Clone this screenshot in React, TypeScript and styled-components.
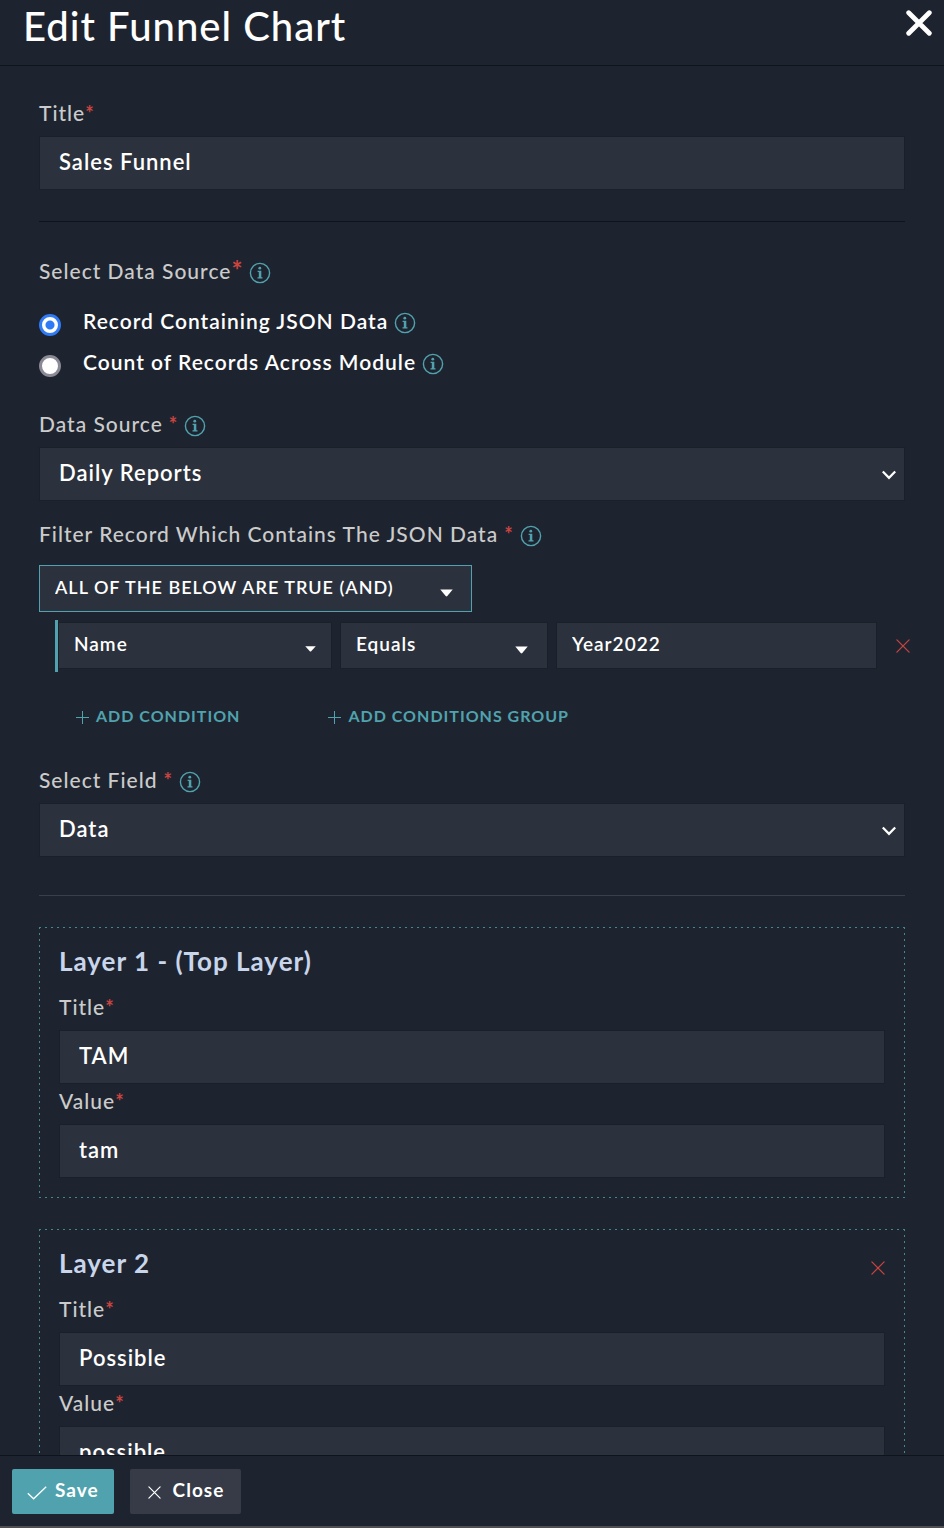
import React, { useId, useState } from "react";
import styled, { createGlobalStyle, css } from "styled-components";

const color = {
  page: "#1e242f",
  field: "#2c323d",
  fieldEdge: "#1a1f28",
  line: "#0f131b",
  softLine: "#3a3f49",
  teal: "#50a3ae",
  dotted: "#438790",
  red: "#cb4540",
  label: "#cbcbcb",
  heading: "#c8d5ea",
  white: "#ffffff",
  blue: "#2f7bf6",
  grey: "#8b8995",
  close: "#363b47",
};

const GlobalStyle = createGlobalStyle`
  *, *::before, *::after { box-sizing: border-box; }
  body {
    margin: 0;
    background: ${color.page};
    color: ${color.white};
    font-family: Lato, "Liberation Sans", sans-serif;
    letter-spacing: 1px;
  }
  button, input, select { font: inherit; color: inherit; letter-spacing: inherit; margin: 0; }
`;

const Dialog = styled.form`
  display: flex;
  flex-direction: column;
  height: 100vh;
  border-bottom: 2px solid #504e50;
`;

const Header = styled.header`
  display: flex;
  flex: none;
  align-items: flex-start;
  justify-content: space-between;
  padding: 2px 12px 15px 23px;
  border-bottom: 1px solid ${color.line};
`;

const DialogTitle = styled.h1`
  margin: 0;
  font-size: 40px;
  font-weight: 500;
  line-height: 48px;
`;

const IconButton = styled.button`
  display: flex;
  align-items: center;
  justify-content: center;
  padding: 0;
  border: 0;
  background: none;
  cursor: pointer;
`;

const HeaderClose = styled(IconButton)`
  margin-top: 8px;
`;

const Body = styled.main`
  flex: 1;
  min-height: 0;
  overflow-y: auto;
  scrollbar-width: none;
  padding: 34px 39px 31px;
`;

const Divider = styled.hr<{ $soft?: boolean }>`
  height: 1px;
  margin: ${(p) => (p.$soft ? "38px 0 31px" : "31px 0 36px")};
  border: 0;
  background: ${(p) => (p.$soft ? color.softLine : color.line)};
`;

const FieldGroup = styled.div<{ $top?: number }>`
  margin-top: ${(p) => p.$top ?? 0}px;
`;

const LabelRow = styled.div`
  display: flex;
  align-items: center;
  height: 26px;
  margin-bottom: 10px;
  color: ${color.label};
  font-size: 21px;
  font-weight: 500;
  line-height: 26px;
`;

const Star = styled.span<{ $spaced?: boolean; $large?: boolean }>`
  color: ${color.red};
  font-size: 20px;
  font-weight: 700;
  ${(p) => p.$spaced && css`margin-left: 6px;`}
  ${(p) =>
    p.$large &&
    css`
      align-self: flex-start;
      font-size: 26px;
      line-height: 24px;
    `}
`;

const InfoMark = styled.svg`
  flex: none;
  width: 22px;
  height: 22px;
  margin: 4px 0 0 6px;
`;

const fieldBox = css`
  display: block;
  width: 100%;
  height: 54px;
  padding: 0 19px 3px;
  border: 1px solid ${color.fieldEdge};
  border-radius: 0;
  background: ${color.field};
  font-size: 22px;
  font-weight: 600;
  outline: none;
`;

const smallBox = css`
  height: 47px;
  padding: 0 16px 4px 15px;
  font-size: 19px;
`;

const TextInput = styled.input<{ $small?: boolean }>`
  ${fieldBox}
  ${(p) => p.$small && smallBox}
`;

const SelectWrap = styled.div<{ $half?: boolean }>`
  position: relative;
  width: ${(p) => (p.$half ? "50%" : "100%")};
`;

const SelectBox = styled.select<{ $small?: boolean; $outlined?: boolean }>`
  ${fieldBox}
  ${(p) => p.$small && smallBox}
  appearance: none;
  ${(p) =>
    p.$outlined &&
    css`
      border-color: ${color.teal};
      font-size: 18px;
    `}
`;

const SelectMark = styled.svg<{ $right: number }>`
  position: absolute;
  top: 50%;
  right: ${(p) => p.$right}px;
  pointer-events: none;
`;

const ChevronMark = styled(SelectMark)`
  margin-top: -4px;
`;

const RadioList = styled.div`
  margin: 17px 0 28px;
`;

const RadioRow = styled.label`
  display: flex;
  align-items: center;
  height: 41px;
  padding-bottom: 2px;
  font-size: 21px;
  font-weight: 600;
`;

const Radio = styled.input`
  appearance: none;
  flex: none;
  width: 22px;
  height: 22px;
  margin: 9px 22px 0 0;
  border: 3px solid ${color.grey};
  border-radius: 50%;
  background: ${color.white};

  &:checked {
    border-color: ${color.blue};
    background: radial-gradient(circle, ${color.blue} 4px, ${color.white} 5px);
  }
`;

const ConditionRow = styled.div`
  display: grid;
  grid-template-columns: 274fr 208fr 321fr 36px;
  gap: 8px;
  align-items: center;
  height: 52px;
  margin: 8px -16px 30px 16px;
  padding-bottom: 1px;
  border-left: 3px solid ${color.teal};
`;

const FilterHead = styled.div`
  margin-top: 18px;
`;

const AddRow = styled.div`
  display: flex;
  gap: 88px;
  padding-left: 37px;
  margin-bottom: 37px;
`;

const AddButton = styled.button`
  display: flex;
  align-items: center;
  gap: 7px;
  height: 28px;
  padding: 0;
  border: 0;
  background: none;
  color: ${color.teal};
  font-size: 16px;
  font-weight: 700;
  line-height: 28px;
  cursor: pointer;

  svg { margin-top: 3px; }
`;

/* The frame is drawn with gradients: 2px dashes with 4px gaps on each side. */
const LayerCard = styled.section`
  margin-bottom: 31px;
  padding: 20px;
  background:
    repeating-linear-gradient(90deg, ${color.dotted} 0 2px, transparent 2px 6px) 0 0 / 100% 1px no-repeat,
    repeating-linear-gradient(90deg, ${color.dotted} 0 2px, transparent 2px 6px) 0 100% / 100% 1px no-repeat,
    repeating-linear-gradient(180deg, ${color.dotted} 0 2px, transparent 2px 6px) 0 0 / 1px 100% no-repeat,
    repeating-linear-gradient(180deg, ${color.dotted} 0 2px, transparent 2px 6px) 100% 0 / 1px 100% no-repeat;
`;

const LayerHead = styled.div`
  display: flex;
  align-items: center;
  justify-content: space-between;
  height: 28px;
  margin-bottom: 19px;
`;

const LayerTitle = styled.h2`
  margin: 0;
  color: ${color.heading};
  font-size: 26px;
  font-weight: 700;
  line-height: 28px;
`;

const RemoveLayer = styled(IconButton)`
  margin-top: 10px;
`;

const Footer = styled.footer`
  display: flex;
  flex: none;
  gap: 16px;
  padding: 13px 12px 12px;
  border-top: 1px solid ${color.line};
`;

const FooterButton = styled.button<{ $primary?: boolean }>`
  display: flex;
  align-items: center;
  gap: ${(p) => (p.$primary ? 8 : 12)}px;
  height: 45px;
  padding: ${(p) => (p.$primary ? "0 15px 4px" : "0 17px 4px 18px")};
  border: 0;
  border-radius: 2px;
  background: ${(p) => (p.$primary ? color.teal : color.close)};
  font-size: 19px;
  font-weight: 700;
  cursor: pointer;

  svg { margin-top: 6px; }
`;

function Info() {
  return (
    <InfoMark viewBox="0 0 22 22" aria-hidden="true">
      <circle cx="11" cy="11" r="9.6" fill="none" stroke={color.teal} strokeWidth="1.4" />
      <circle cx="10.8" cy="6.2" r="1.4" fill={color.teal} />
      <path d="M8.6 8.8h3.7v6.4h1.2v1.2h-5v-1.2h1.3V10H8.6z" fill={color.teal} />
    </InfoMark>
  );
}

function Cross({ size, stroke, width = 1.2 }: { size: number; stroke: string; width?: number }) {
  const inset = width / 2 + 0.3;
  const far = size - inset;
  return (
    <svg width={size} height={size} viewBox={`0 0 ${size} ${size}`} aria-hidden="true">
      <path
        d={`M${inset} ${inset}L${far} ${far}M${far} ${inset}L${inset} ${far}`}
        stroke={stroke}
        strokeWidth={width}
        strokeLinecap="round"
      />
    </svg>
  );
}

function Plus() {
  return (
    <svg width="13" height="13" viewBox="0 0 13 13" aria-hidden="true">
      <path d="M6.5 0v13M0 6.5h13" stroke={color.teal} strokeWidth="1" />
    </svg>
  );
}

function Chevron() {
  return (
    <ChevronMark $right={8} width="16" height="10" viewBox="0 0 16 10" aria-hidden="true">
      <path d="M1.8 1.4L8 7.8l6.2-6.4" fill="none" stroke={color.white} strokeWidth="2.2" />
    </ChevronMark>
  );
}

function Caret({ right, small }: { right: number; small?: boolean }) {
  return (
    <SelectMark
      $right={right}
      width={small ? 11 : 13}
      height={small ? 6 : 8}
      viewBox="0 0 13 8"
      preserveAspectRatio="none"
      aria-hidden="true"
    >
      <path d="M.3.4h12.4L7.3 7q-.8.8-1.6 0z" fill={color.white} />
    </SelectMark>
  );
}

function TextField({ label, initial, top }: { label: string; initial: string; top?: number }) {
  const id = useId();
  const [value, setValue] = useState(initial);
  return (
    <FieldGroup $top={top}>
      <LabelRow>
        <label htmlFor={id}>{label}</label>
        <Star>*</Star>
      </LabelRow>
      <TextInput id={id} value={value} onChange={(e) => setValue(e.target.value)} />
    </FieldGroup>
  );
}

function SelectField({ label, option }: { label: string; option: string }) {
  const id = useId();
  return (
    <FieldGroup>
      <LabelRow>
        <label htmlFor={id}>{label}</label>
        <Star $spaced>*</Star>
        <Info />
      </LabelRow>
      <SelectWrap>
        <SelectBox id={id}>
          <option>{option}</option>
        </SelectBox>
        <Chevron />
      </SelectWrap>
    </FieldGroup>
  );
}

function Layer({ name, title, value, removable }: { name: string; title: string; value: string; removable?: boolean }) {
  return (
    <LayerCard>
      <LayerHead>
        <LayerTitle>{name}</LayerTitle>
        {removable && (
          <RemoveLayer type="button" aria-label="Remove layer">
            <Cross size={14} stroke={color.red} />
          </RemoveLayer>
        )}
      </LayerHead>
      <TextField label="Title" initial={title} />
      <TextField label="Value" initial={value} top={4} />
    </LayerCard>
  );
}

export default function App() {
  const [source, setSource] = useState("record");
  return (
    <>
      <GlobalStyle />
      <Dialog onSubmit={(e) => e.preventDefault()}>
        <Header>
          <DialogTitle>Edit Funnel Chart</DialogTitle>
          <HeaderClose type="button" aria-label="Close dialog">
            <Cross size={26} stroke={color.white} width={4.8} />
          </HeaderClose>
        </Header>

        <Body>
          <TextField label="Title" initial="Sales Funnel" />
          <Divider />

          <LabelRow>
            <span id="source-label">Select Data Source</span>
            <Star $large>*</Star>
            <Info />
          </LabelRow>
          <RadioList role="radiogroup" aria-labelledby="source-label">
            <RadioRow>
              <Radio type="radio" name="source" checked={source === "record"} onChange={() => setSource("record")} />
              Record Containing JSON Data
              <Info />
            </RadioRow>
            <RadioRow>
              <Radio type="radio" name="source" checked={source === "count"} onChange={() => setSource("count")} />
              Count of Records Across Module
              <Info />
            </RadioRow>
          </RadioList>

          <SelectField label="Data Source" option="Daily Reports" />

          <FieldGroup $top={20}>
            <LabelRow>
              <label htmlFor="filter-logic">Filter Record Which Contains The JSON Data</label>
              <Star $spaced>*</Star>
              <Info />
            </LabelRow>
            <FilterHead>
              <SelectWrap $half>
                <SelectBox id="filter-logic" $small $outlined>
                  <option>ALL OF THE BELOW ARE TRUE (AND)</option>
                </SelectBox>
                <Caret right={19} />
              </SelectWrap>
            </FilterHead>
            <ConditionRow>
              <SelectWrap>
                <SelectBox $small aria-label="Field">
                  <option>Name</option>
                </SelectBox>
                <Caret right={16} small />
              </SelectWrap>
              <SelectWrap>
                <SelectBox $small aria-label="Operator">
                  <option>Equals</option>
                </SelectBox>
                <Caret right={20} />
              </SelectWrap>
              <TextInput $small aria-label="Value" defaultValue="Year2022" />
              <IconButton type="button" aria-label="Remove condition">
                <Cross size={14} stroke={color.red} />
              </IconButton>
            </ConditionRow>
            <AddRow>
              <AddButton type="button">
                <Plus />
                ADD CONDITION
              </AddButton>
              <AddButton type="button">
                <Plus />
                ADD CONDITIONS GROUP
              </AddButton>
            </AddRow>
          </FieldGroup>

          <SelectField label="Select Field" option="Data" />
          <Divider $soft />

          <Layer name="Layer 1 - (Top Layer)" title="TAM" value="tam" />
          <Layer name="Layer 2" title="Possible" value="possible" removable />
        </Body>

        <Footer>
          <FooterButton type="submit" $primary>
            <svg width="20" height="14" viewBox="0 0 20 14" aria-hidden="true">
              <path d="M.8 7.2l5.8 5.6L19.2.8" fill="none" stroke={color.white} strokeWidth="1.3" />
            </svg>
            Save
          </FooterButton>
          <FooterButton type="button">
            <Cross size={13} stroke={color.white} />
            Close
          </FooterButton>
        </Footer>
      </Dialog>
    </>
  );
}
